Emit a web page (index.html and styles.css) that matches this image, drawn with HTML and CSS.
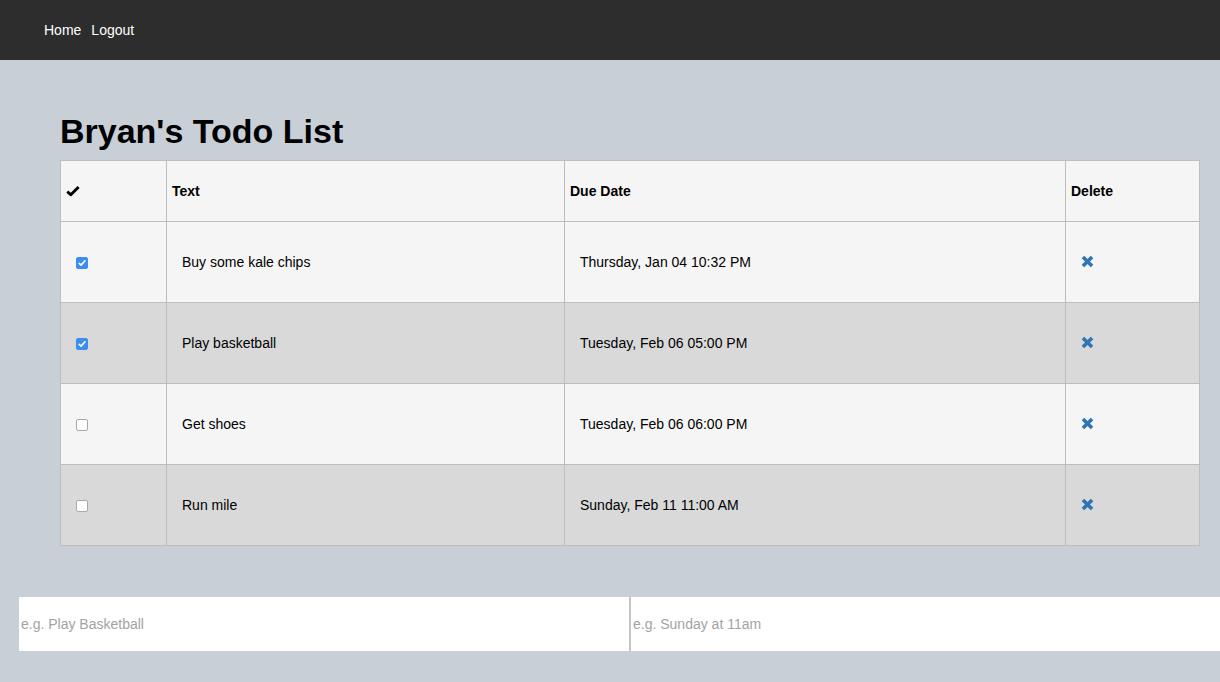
FILE: index.html
```html
<!DOCTYPE html>
<html>
<head>
<meta charset="utf-8">
<link rel="stylesheet" href="styles.css">
</head>
<body>
<nav class="navbar">
  <a class="nav-link" href="#">Home</a>
  <a class="nav-link" href="#">Logout</a>
</nav>
<main class="content">
  <h1 class="title">Bryan's Todo List</h1>
  <table class="todo-table">
    <colgroup>
      <col class="c-check"><col class="c-text"><col class="c-date"><col class="c-del">
    </colgroup>
    <thead>
      <tr><th class="check-head"><svg class="head-check" viewBox="0 0 14 12" width="14" height="12"><path d="M1.3 6.6 L4.8 9.8 L12.6 2" fill="none" stroke="#000" stroke-width="2.9" stroke-linejoin="round"/></svg></th><th>Text</th><th>Due Date</th><th>Delete</th></tr>
    </thead>
    <tbody>
      <tr class="odd">
        <td class="check"><span class="cb checked"><svg viewBox="0 0 12 12" width="12" height="12"><path d="M3.2 6.3 L5.1 8.1 L8.9 3.9" fill="none" stroke="#fff" stroke-width="1.6" stroke-linecap="round" stroke-linejoin="round"/></svg></span></td>
        <td class="txt">Buy some kale chips</td>
        <td class="txt">Thursday, Jan 04 10:32 PM</td>
        <td class="del"><svg class="x" viewBox="0 0 12 12" width="13" height="13"><path d="M1.8 1.8 L10.2 10.2 M10.2 1.8 L1.8 10.2" stroke="#2f74b5" stroke-width="3.3"/></svg></td>
      </tr>
      <tr class="even">
        <td class="check"><span class="cb checked"><svg viewBox="0 0 12 12" width="12" height="12"><path d="M3.2 6.3 L5.1 8.1 L8.9 3.9" fill="none" stroke="#fff" stroke-width="1.6" stroke-linecap="round" stroke-linejoin="round"/></svg></span></td>
        <td class="txt">Play basketball</td>
        <td class="txt">Tuesday, Feb 06 05:00 PM</td>
        <td class="del"><svg class="x" viewBox="0 0 12 12" width="13" height="13"><path d="M1.8 1.8 L10.2 10.2 M10.2 1.8 L1.8 10.2" stroke="#2f74b5" stroke-width="3.3"/></svg></td>
      </tr>
      <tr class="odd">
        <td class="check"><span class="cb"></span></td>
        <td class="txt">Get shoes</td>
        <td class="txt">Tuesday, Feb 06 06:00 PM</td>
        <td class="del"><svg class="x" viewBox="0 0 12 12" width="13" height="13"><path d="M1.8 1.8 L10.2 10.2 M10.2 1.8 L1.8 10.2" stroke="#2f74b5" stroke-width="3.3"/></svg></td>
      </tr>
      <tr class="even">
        <td class="check"><span class="cb"></span></td>
        <td class="txt">Run mile</td>
        <td class="txt">Sunday, Feb 11 11:00 AM</td>
        <td class="del"><svg class="x" viewBox="0 0 12 12" width="13" height="13"><path d="M1.8 1.8 L10.2 10.2 M10.2 1.8 L1.8 10.2" stroke="#2f74b5" stroke-width="3.3"/></svg></td>
      </tr>
    </tbody>
  </table>
</main>
<form class="add-form">
  <input class="field first" type="text" placeholder="e.g. Play Basketball">
  <input class="field second" type="text" placeholder="e.g. Sunday at 11am">
</form>
</body>
</html>
```

FILE: styles.css
```css
html, body {
  margin: 0;
  padding: 0;
}
body {
  background: #c8cfd7;
  font-family: "Liberation Sans", Arial, Helvetica, sans-serif;
  color: #000;
  overflow-x: hidden;
  min-height: 682px;
}
.navbar {
  height: 60px;
  background: #2d2d2d;
  display: flex;
  align-items: center;
  padding-left: 44px;
  gap: 10px;
  box-sizing: border-box;
}
.nav-link {
  color: #fff;
  text-decoration: none;
  font-size: 14px;
}
.content {
  padding-left: 60px;
  padding-right: 20px;
  padding-top: 46px;
}
.title {
  margin: 0 0 4px 0;
  font-size: 34px;
  font-weight: bold;
  line-height: 50px;
}
.todo-table {
  border-collapse: collapse;
  width: 1139px;
  table-layout: fixed;
  font-size: 14px;
}
.c-check { width: 106px; }
.c-text { width: 398px; }
.c-date { width: 501px; }
.c-del { width: 134px; }
.todo-table th, .todo-table td {
  border: 1px solid #bdbdbd;
  text-align: left;
  vertical-align: middle;
}
.todo-table th {
  background: #f5f5f5;
  height: 61px;
  padding: 0 5px;
  font-weight: bold;
  box-sizing: border-box;
}
.head-check {
  display: block;
}
.todo-table td {
  height: 81px;
  padding: 0 15px;
  box-sizing: border-box;
}
.todo-table tr.odd td { background: #f5f5f5; }
.todo-table tr.even td { background: #d9d9d9; }
.todo-table td.check { padding-left: 15px; }
.cb {
  display: inline-block;
  width: 12px;
  height: 12px;
  box-sizing: border-box;
  border: 1px solid #a8a8a8;
  border-radius: 2px;
  background: #fff;
  vertical-align: middle;
}
.cb.checked {
  background: #3a8ef2;
  border-color: #3a8ef2;
}
.cb svg {
  display: block;
  margin: -1px;
}
.x {
  display: inline-block;
  vertical-align: middle;
  position: relative;
  top: -2px;
}
.add-form {
  display: flex;
  margin-top: 51px;
  padding-left: 19px;
}
.field {
  flex: none;
  width: 610px;
  height: 54px;
  box-sizing: border-box;
  border: none;
  background: #fff;
  font-family: "Liberation Sans", Arial, Helvetica, sans-serif;
  font-size: 14px;
  padding: 0 2px;
  margin: 0;
  outline: none;
}
.field.second {
  border-left: 2px solid #c4c4c4;
  width: 620px;
}
.field::placeholder {
  color: #a3a3a3;
}
```
